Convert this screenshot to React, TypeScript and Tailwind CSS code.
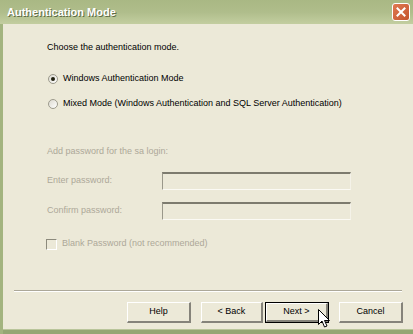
import type { ReactNode } from "react";

const font = { fontFamily: '"Liberation Sans", Arial, sans-serif' };

function Radio({ checked, label }: { checked?: boolean; label: string }) {
  return (
    <div className="flex h-[14px] items-center">
      <span className="ml-[1px] flex h-[10px] w-[10px] items-center justify-center rounded-full border border-[#9c9a8c] bg-gradient-to-br from-[#dcdad0] to-white">
        {checked && <span className="h-[4px] w-[4px] rounded-full bg-[#21210f]" />}
      </span>
      <span className="ml-[5px] text-[9px] text-black">{label}</span>
    </div>
  );
}

function Field({ label }: { label: string }) {
  return (
    <div className="flex h-[18px] items-center">
      <span className="w-[115px] text-[9px] text-[#aca899]">{label}</span>
      <div className="h-[18px] w-[189px] border-t-2 border-l border-b border-r border-t-[#7d7b6e] border-l-[#9a988a] border-b-[#fbfaf4] border-r-[#f4f2e8] bg-[#ece9d8]" />
    </div>
  );
}

function Btn({ children, focused, narrow }: { children: ReactNode; focused?: boolean; narrow?: boolean }) {
  return (
    <div
      className={[
        "h-[21px]",
        narrow ? "w-[62px]" : "w-[64px]",
        focused ? "border border-black" : "",
      ].join(" ")}
    >
      <div className="flex h-full w-full items-center justify-center border-t border-l border-b-2 border-r-2 border-t-white border-l-white border-b-[#85837a] border-r-[#85837a] bg-[#ece9d8] text-[9px] text-black">
        {children}
      </div>
    </div>
  );
}

export default function App() {
  return (
    <div className="relative h-[334px] w-[413px] overflow-hidden bg-[#ece9d8]" style={font}>
      {/* title bar */}
      <div className="flex h-[24px] items-center justify-between bg-gradient-to-b from-[#a9b884] via-[#afbd8b] to-[#c3cea0] pl-[7px] pr-[3px]">
        <span className="text-[11px] font-bold text-white [text-shadow:1px_1px_0_#5e6b45]">
          Authentication Mode
        </span>
        <div className="flex h-[18px] w-[18px] items-center justify-center rounded-[3px] border border-white bg-gradient-to-br from-[#e07a52] to-[#c4532c]">
          <svg width="10" height="10" viewBox="0 0 10 10">
            <path d="M1.5 1.5 L8.5 8.5 M8.5 1.5 L1.5 8.5" stroke="white" strokeWidth="2" strokeLinecap="square" />
          </svg>
        </div>
      </div>

      {/* body */}
      <div className="flex h-[310px] border-l-[3px] border-l-[#a3b47f]">
        <div className="flex flex-1 flex-col">
          <div className="flex flex-col pl-[44px]">
            <div className="mt-[17px] flex h-[13px] items-center text-[9px] text-black">
              Choose the authentication mode.
            </div>
            <div className="mt-[18px]">
              <Radio checked label="Windows Authentication Mode" />
            </div>
            <div className="mt-[11px]">
              <Radio label="Mixed Mode (Windows Authentication and SQL Server Authentication)" />
            </div>
            <div className="mt-[34px] flex h-[14px] items-center text-[9px] text-[#aca899]">
              Add password for the sa login:
            </div>
            <div className="mt-[13px]">
              <Field label="Enter password:" />
            </div>
            <div className="mt-[12px]">
              <Field label="Confirm password:" />
            </div>
            <div className="mt-[17px] flex h-[14px] items-center">
              <span className="-ml-[1px] h-[11px] w-[11px] border-t border-l border-b border-r border-t-[#8c8a7c] border-l-[#8c8a7c] border-b-white border-r-white" />
              <span className="ml-[5px] text-[9px] text-[#aca899]">Blank Password (not recommended)</span>
            </div>
          </div>

          <div className="mt-[39px] ml-[11px] mr-[11px] h-[2px] border-t border-t-[#aca899] border-b border-b-white" />

          <div className="mt-[10px] flex justify-end gap-[10px] pr-[10px]">
            <Btn>Help</Btn>
            <div className="flex gap-[2px]">
              <Btn narrow>&lt; Back</Btn>
              <Btn focused>Next &gt;</Btn>
            </div>
            <Btn>Cancel</Btn>
          </div>

          <div className="mt-auto h-[5px] border-t border-t-[#b9c59a] bg-[#95a673]" />
        </div>
      </div>

      {/* mouse pointer */}
      <svg className="absolute left-[318px] top-[309px]" width="13" height="20" viewBox="0 0 13 20">
        <path
          d="M0.5 0.5 L0.5 15.5 L4 12 L6.5 18 L9 17 L6.5 11.5 L11.5 11.5 Z"
          fill="white"
          stroke="black"
          strokeWidth="1"
          strokeLinejoin="miter"
        />
      </svg>
    </div>
  );
}
